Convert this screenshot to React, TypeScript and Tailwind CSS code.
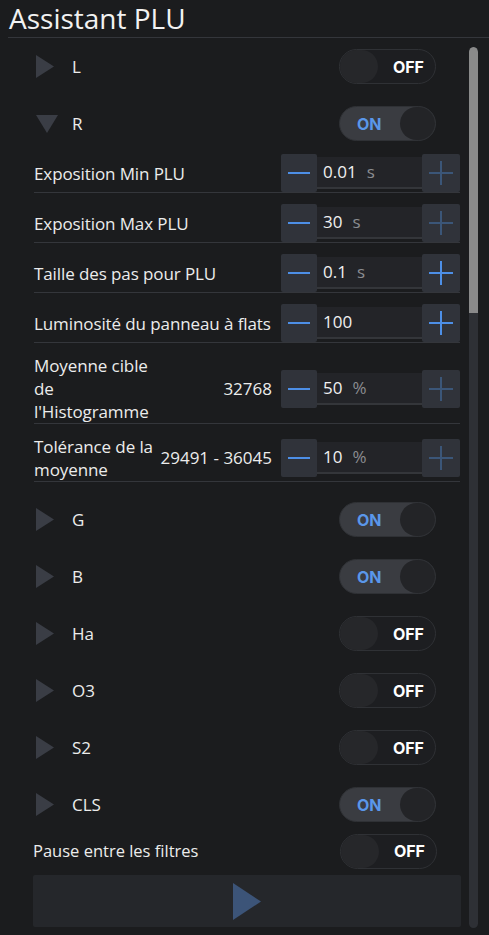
import React from "react";

type Filter = { name: string; on: boolean; open?: boolean };

type Param = {
  label: string[];
  info?: string;
  value: string;
  unit?: string;
  plusActive?: boolean;
};

const FILTERS_TOP: Filter[] = [
  { name: "L", on: false },
  { name: "R", on: true, open: true },
];

const FILTERS_BOTTOM: Filter[] = [
  { name: "G", on: true },
  { name: "B", on: true },
  { name: "Ha", on: false },
  { name: "O3", on: false },
  { name: "S2", on: false },
  { name: "CLS", on: true },
];

const PARAMS: Param[] = [
  { label: ["Exposition Min PLU"], value: "0.01", unit: "s" },
  { label: ["Exposition Max PLU"], value: "30", unit: "s" },
  { label: ["Taille des pas pour PLU"], value: "0.1", unit: "s", plusActive: true },
  { label: ["Luminosité du panneau à flats"], value: "100", plusActive: true },
  {
    label: ["Moyenne cible", "de", "l'Histogramme"],
    info: "32768",
    value: "50",
    unit: "%",
  },
  {
    label: ["Tolérance de la", "moyenne"],
    info: "29491 - 36045",
    value: "10",
    unit: "%",
  },
];

function Toggle({ on, className = "" }: { on: boolean; className?: string }) {
  return (
    <div
      className={[
        "flex h-[35px] w-[97px] shrink-0 items-center rounded-full border border-[#2f3135] font-['Inter',sans-serif] text-[16px] font-bold",
        on ? "bg-[#3a3c41]" : "bg-[#1d1e21]",
        className,
      ].join(" ")}
    >
      {on ? (
        <>
          <span className="ml-[17px] text-[#5a97ea]">ON</span>
          <span className="ml-auto h-[33px] w-[35px] rounded-full bg-[#232427]" />
        </>
      ) : (
        <>
          <span className="h-[33px] w-[38px] rounded-full bg-[#26272a]" />
          <span className="ml-auto mr-[11px] text-white">OFF</span>
        </>
      )}
    </div>
  );
}

function FilterRow({ f }: { f: Filter }) {
  return (
    <div className="flex h-[57px] items-center">
      <div className="ml-[3px] flex w-[36px] items-center">
        {f.open ? (
          <svg width="22" height="18" viewBox="0 0 22 18">
            <polygon points="0,0 22,0 11,18" fill="#3a3d45" />
          </svg>
        ) : (
          <svg width="18" height="23" viewBox="0 0 18 23">
            <polygon points="0,0 18,11.5 0,23" fill="#3a3d45" />
          </svg>
        )}
      </div>
      <span className="text-[17px]">{f.name}</span>
      <Toggle on={f.on} className="ml-auto mr-[25px]" />
    </div>
  );
}

function Stepper({ p }: { p: Param }) {
  const plus = p.plusActive ? "bg-[#4d8fe6]" : "bg-[#3b5678]";
  return (
    <div className="relative flex h-[38px] w-[179px] shrink-0 items-stretch">
      <div className="flex w-[36px] items-center justify-center rounded-[2px] bg-[#30333a]">
        <span className="h-[2px] w-[22px] bg-[#4d8fe6]" />
      </div>
      <div className="my-[3px] flex w-[105px] items-center border-b-2 border-[#34363a] bg-[#232428] pl-[6px] text-[17px]">
        <span className="text-[#f0f0f0]">{p.value}</span>
        {p.unit ? <span className="ml-[10px] text-[#8b8d91]">{p.unit}</span> : null}
      </div>
      <div className="relative flex w-[38px] items-center justify-center rounded-[2px] bg-[#30333a]">
        <span className={["absolute h-[2px] w-[24px]", plus].join(" ")} />
        <span className={["absolute h-[24px] w-[2px]", plus].join(" ")} />
      </div>
    </div>
  );
}

function ParamRow({ p }: { p: Param }) {
  return (
    <div className="ml-[1px] flex w-[426px] items-center border-b border-[#34363b]">
      <div className="min-w-0 text-[17px] leading-[23px] tracking-[-0.1px]">
        {p.label.map((l) => (
          <div key={l} className="whitespace-nowrap">
            {l}
          </div>
        ))}
      </div>
      <div className="ml-auto mr-[9px] shrink-0 text-[17px]">{p.info}</div>
      <Stepper p={p} />
    </div>
  );
}

export default function App() {
  return (
    <div className="h-[935px] w-[489px] overflow-hidden bg-[#1b1c1e] font-['Open_Sans',sans-serif] text-[#ececec]">
      <div className="ml-[8px] h-[38px] border-b border-[#34363b]">
        <h1 className="pl-[1px] text-[28px] leading-[36px] text-[#f2f2f2]">Assistant PLU</h1>
      </div>

      <div className="flex">
        <div className="ml-[33px] w-[428px]">
          {FILTERS_TOP.map((f) => (
            <FilterRow key={f.name} f={f} />
          ))}

          {/* expanded R settings */}
          <div className="flex flex-col gap-[11px] pt-[2px]">
            {PARAMS.map((p) => (
              <ParamRow key={p.label[0]} p={p} />
            ))}
          </div>

          <div className="mt-[9px]">
            {FILTERS_BOTTOM.map((f) => (
              <FilterRow key={f.name} f={f} />
            ))}
          </div>

          <div className="flex h-[36px] items-center">
            <span className="text-[16.5px]">Pause entre les filtres</span>
            <Toggle on={false} className="ml-auto mr-[24px]" />
          </div>

          <div className="mt-[6px] flex h-[52px] items-center justify-center rounded-[2px] bg-[#25272b]">
            <svg width="28" height="37" viewBox="0 0 28 37">
              <polygon points="0,0 28,18.5 0,37" fill="#3c5478" />
            </svg>
          </div>
        </div>

        {/* scrollbar */}
        <div className="ml-[8px] mt-[9px] h-[881px] w-[9px] overflow-hidden rounded-full bg-[#2e3035]">
          <div className="h-[266px] rounded-t-full bg-[#8a8a8a]" />
        </div>
      </div>
    </div>
  );
}
